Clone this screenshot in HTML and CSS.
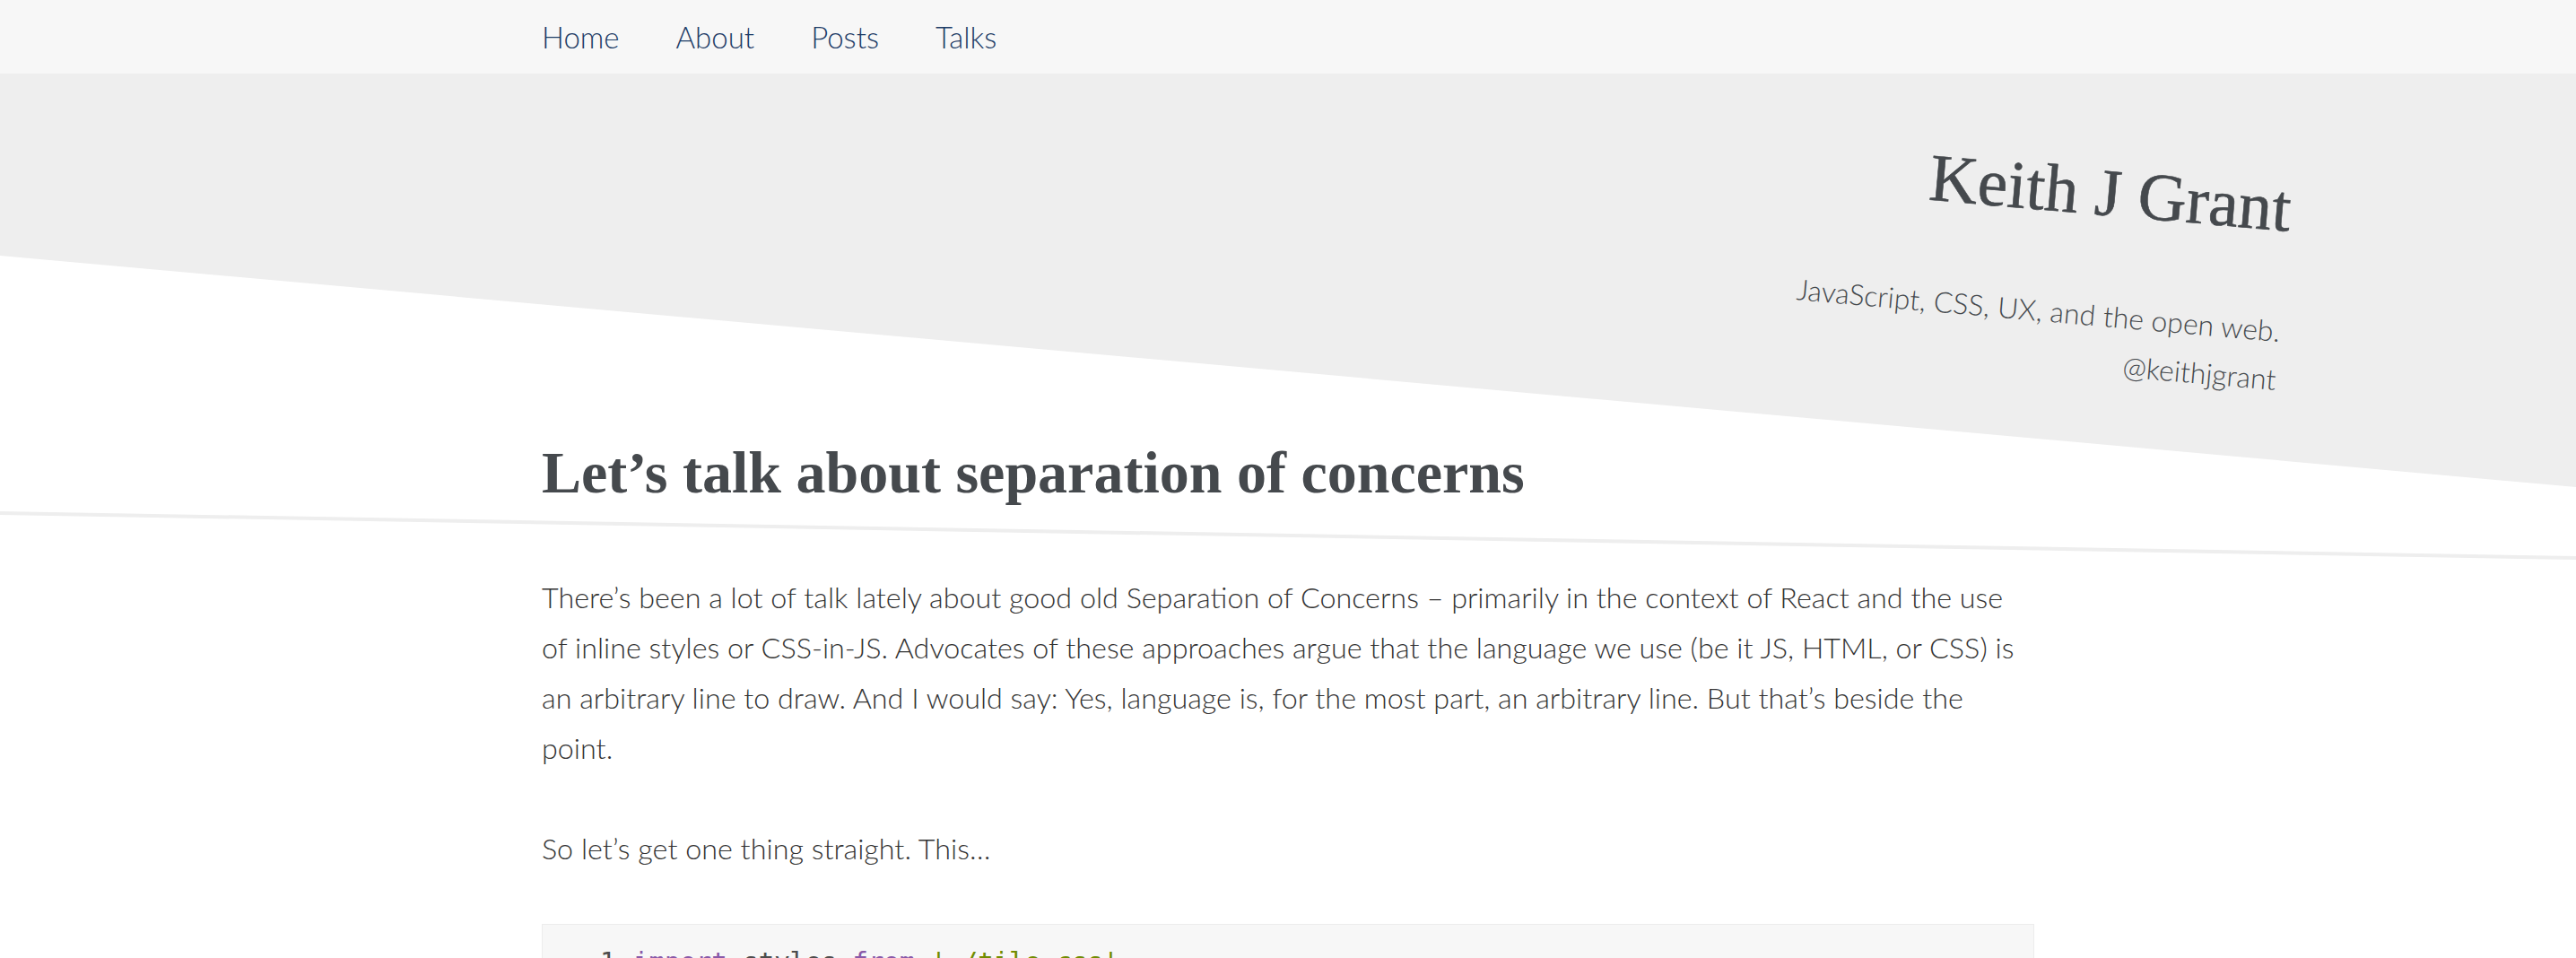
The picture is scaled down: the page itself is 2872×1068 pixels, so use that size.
FILE: index.html
```html
<!DOCTYPE html>
<html lang="en">
<head>
<meta charset="utf-8">
<title>Let’s talk about separation of concerns – Keith J Grant</title>
<link rel="stylesheet" href="styles.css">
</head>
<body>
<nav class="topnav">
  <div class="wrap nav-links">
    <a href="#" class="nav-link">Home</a>
    <a href="#" class="nav-link">About</a>
    <a href="#" class="nav-link">Posts</a>
    <a href="#" class="nav-link">Talks</a>
  </div>
</nav>
<header class="masthead">
  <div class="brand">
    <div class="site-title">Keith J Grant</div>
    <p class="tagline">JavaScript, CSS, UX, and the open web.<br><a href="#" class="handle">@keithjgrant</a></p>
  </div>
</header>
<main>
  <div class="wrap">
    <h1 class="post-title">Let’s talk about separation of concerns</h1>
  </div>
  <div class="rule"></div>
  <div class="wrap post-body">
    <p>There’s been a lot of talk lately about good old Separation of Concerns – primarily in the context of React and the use of inline styles or CSS-in-JS. Advocates of these approaches argue that the language we use (be it JS, HTML, or CSS) is an arbitrary line to draw. And I would say: Yes, language is, for the most part, an arbitrary line. But that’s beside the point.</p>
    <p>So let’s get one thing straight. This…</p>
    <pre class="code"><code><span class="ln">1</span><span class="kw">import</span> styles <span class="kw">from</span> <span class="str">'./tile.css'</span>
<span class="ln">2</span>
<span class="ln">3</span><span class="kw">export</span> <span class="kw">default</span> <span class="kw">function</span> Tile() {</code></pre>
  </div>
</main>
</body>
</html>
```

FILE: styles.css
```css
html, body {
  margin: 0;
  padding: 0;
}
body {
  background: #fff;
  color: #333;
  font-family: Lato, "Open Sans", sans-serif;
  font-weight: 300;
  overflow-x: hidden;
}
.wrap {
  max-width: 1664px;
  margin: 0 auto;
}
.topnav {
  background: #f7f7f7;
  height: 82px;
}
.nav-links {
  display: flex;
  align-items: center;
  height: 82px;
  gap: 63px;
}
.nav-link {
  color: #1d3c66;
  text-decoration: none;
  font-size: 33px;
  font-weight: 300;
}
.masthead {
  box-sizing: border-box;
  height: 461px;
  margin-bottom: -56px;
  background: #eeeeee;
  clip-path: polygon(0 0, 100% 0, 100% 100%, 0 203px);
  display: flex;
  justify-content: flex-end;
  align-items: flex-start;
  padding: 107px 314px 0 0;
}
.brand {
  text-align: right;
  transform: rotate(5deg);
  transform-origin: right top;
  color: #45494d;
}
.site-title {
  font-family: "Liberation Serif", serif;
  font-size: 75px;
  line-height: 88.8px;
  font-weight: 400;
  -webkit-text-stroke: 0.6px #45494d;
}
.tagline {
  margin: 65px 0 0;
  font-size: 32px;
  line-height: 54px;
  font-weight: 300;
}
.handle {
  color: #45494d;
  text-decoration: none;
}
.post-title {
  margin: 0;
  font-family: "Liberation Serif", serif;
  font-weight: 700;
  font-size: 66px;
  line-height: 79.2px;
  color: #45494d;
}
.rule {
  width: 2920px;
  height: 4px;
  margin: 29px 0 0 -24px;
  background: #eeeeee;
  transform: rotate(1deg);
}
.post-body {
  padding-top: 39px;
}
.post-body p {
  margin: 0 0 56px;
  font-size: 32.3px;
  line-height: 56px;
}
.code {
  margin: 0;
  background: #f7f7f7;
  border: 1px solid #ececec;
  padding: 20px 0 20px 64px;
  font-family: "Liberation Mono", monospace;
  font-size: 29px;
  line-height: 43.5px;
  color: #4d4d4c;
}
.ln {
  display: inline-block;
  width: 37px;
  color: #4d4d4c;
}
.kw {
  color: #8959a8;
}
.str {
  color: #718c00;
}
```
